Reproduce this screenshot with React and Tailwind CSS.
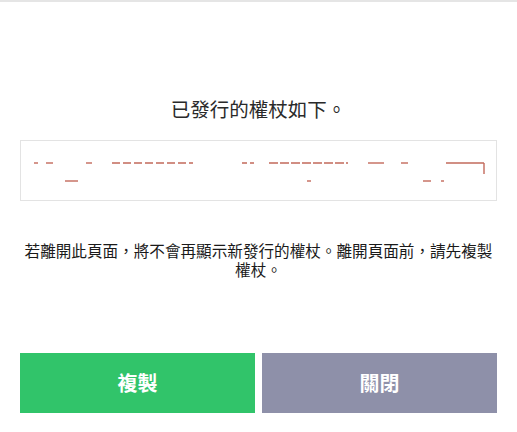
import React from "react";

const fontStack = '"Noto Sans CJK TC", "Noto Sans", sans-serif';

// redacted token fragments, coords relative to the token box
const TokenFragments = () => (
  <svg className="absolute left-0 top-0" width="477" height="61" viewBox="0 0 477 61">
    <g stroke="#b9503f" strokeWidth="1.4" opacity="0.85">
      <line x1="13" y1="22" x2="17" y2="22" />
      <line x1="25" y1="22" x2="32" y2="22" />
      <line x1="65" y1="22" x2="71" y2="22" />
      <line x1="91" y1="22" x2="172" y2="22" strokeDasharray="8 3" />
      <line x1="221" y1="22" x2="233" y2="22" strokeDasharray="5 3" />
      <line x1="248" y1="22" x2="327" y2="22" strokeDasharray="9 2" />
      <line x1="347" y1="22" x2="363" y2="22" />
      <line x1="380" y1="22" x2="387" y2="22" />
      <line x1="425" y1="22" x2="463" y2="22" />
      <line x1="463" y1="22" x2="463" y2="33" />
      <line x1="44" y1="40" x2="57" y2="40" />
      <line x1="286" y1="40" x2="290" y2="40" />
      <line x1="402" y1="40" x2="410" y2="40" />
      <line x1="420" y1="40" x2="423" y2="40" />
    </g>
  </svg>
);

export default function App() {
  return (
    <div
      className="w-[517px] h-[432px] bg-white border-t-2 border-[#e5e5e5] px-5 flex flex-col overflow-hidden"
      style={{ fontFamily: fontStack }}
    >
      <h2 className="mt-[91px] h-[32px] flex items-center justify-center text-[19.5px] text-[#2a2a2a] font-normal">
        已發行的權杖如下。
      </h2>
      <div className="mt-[15px] h-[61px] border border-[#e3e3e3] relative">
        <TokenFragments />
      </div>
      <p className="mt-[40px] text-center text-[15.6px] leading-[19px] text-[#1a1a1a]">
        若離開此頁面，將不會再顯示新發行的權杖。離開頁面前，請先複製權杖。
      </p>
      <div className="mt-[74px] flex gap-[7px]">
        <button className="flex-1 h-[60px] bg-[#31c46a] text-white text-[20px] font-bold">
          複製
        </button>
        <button className="flex-1 h-[60px] bg-[#8e90a9] text-white text-[20px] font-bold">
          關閉
        </button>
      </div>
    </div>
  );
}
